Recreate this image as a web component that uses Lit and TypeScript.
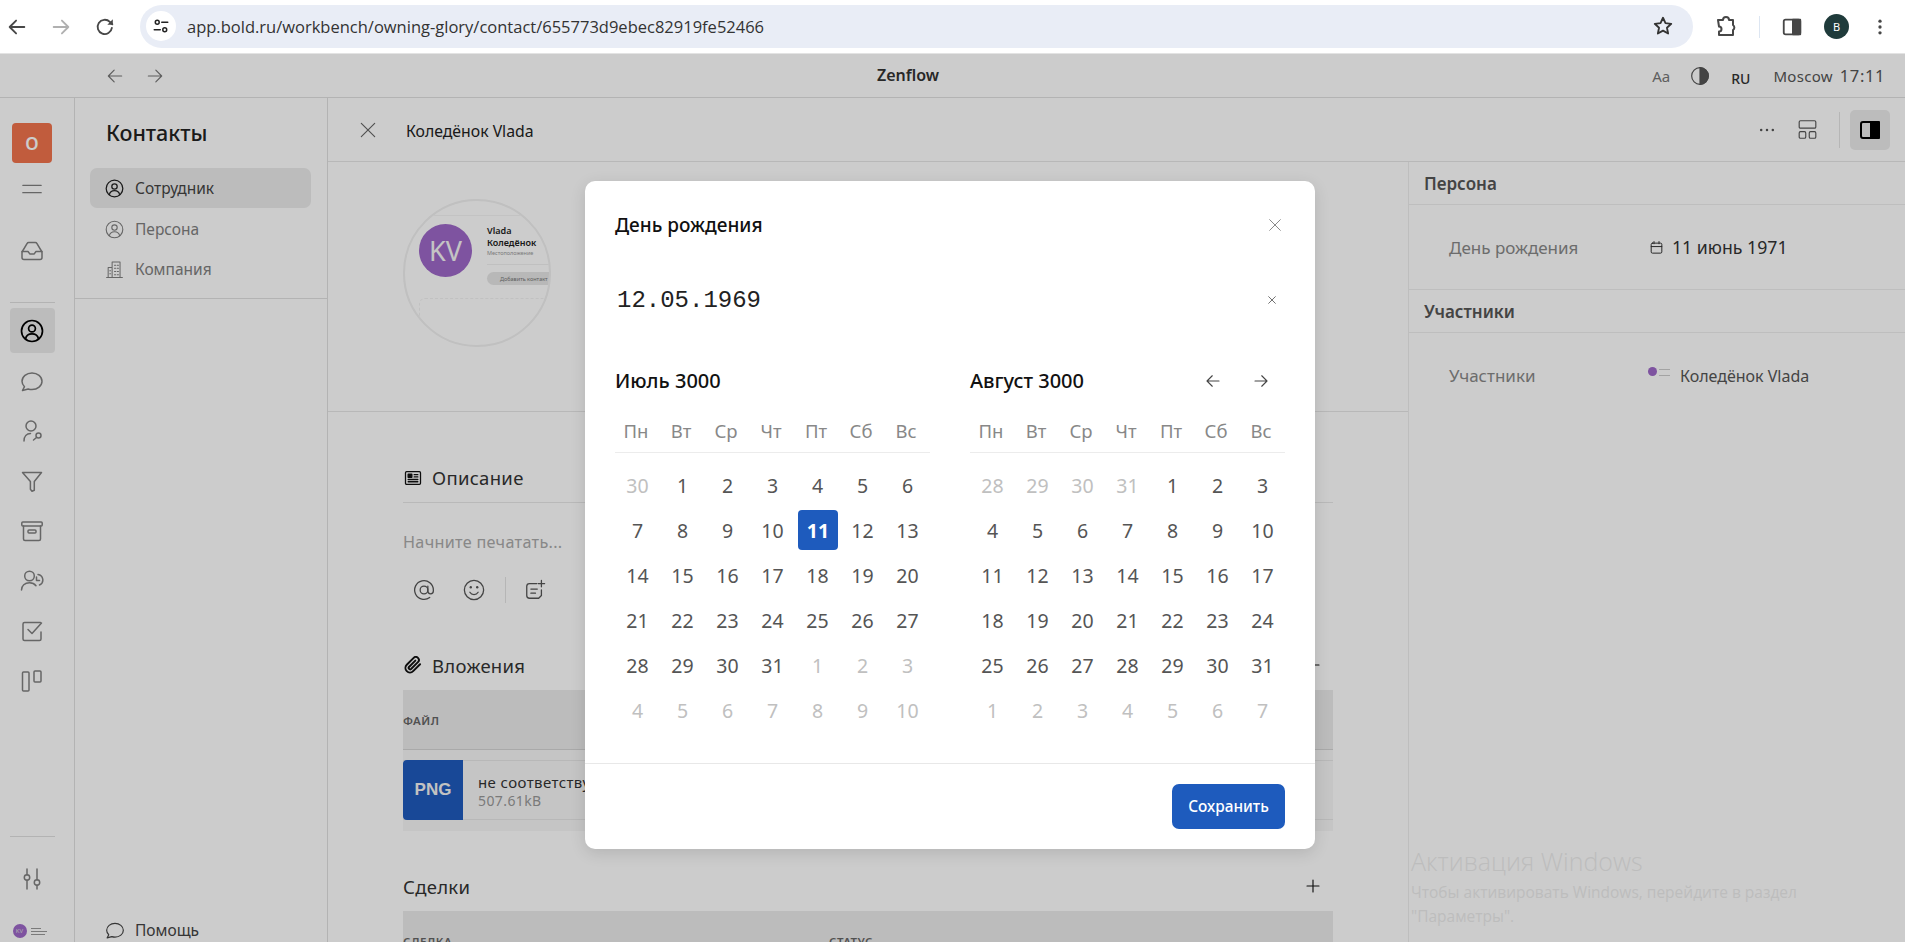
import { LitElement, css, html, svg } from 'lit';
import { customElement } from 'lit/decorators.js';
import { classMap } from 'lit/directives/class-map.js';

const icon = (body: unknown, size = 24, sw = 1.6) => html`<svg
  width=${size} height=${size} viewBox="0 0 24 24" fill="none" stroke="currentColor"
  stroke-width=${sw} stroke-linecap="round" stroke-linejoin="round">${body}</svg>`;

const I = {
  back: svg`<path d="M20 12H4M11 5l-7 7 7 7"/>`,
  forward: svg`<path d="M4 12h16M13 5l7 7-7 7"/>`,
  close: svg`<path d="M4 4l16 16M20 4L4 20"/>`,
  reload: svg`<path d="M19.5 13a7.8 7.8 0 1 1-2.2-6.6L20 9"/><path d="M20.5 3.5V9.5h-6" fill="currentColor" stroke="none"/>`,
  tune: svg`<circle cx="7" cy="7" r="2.6"/><path d="M13 7h8M3 17h8"/><circle cx="17" cy="17" r="2.6"/>`,
  star: svg`<path d="M12 3l2.7 5.9 6.3.7-4.7 4.3 1.3 6.3L12 17l-5.6 3.2 1.3-6.3L3 9.6l6.3-.7z"/>`,
  puzzle: svg`<path d="M4 5h5a3 3 0 0 1 6 0h4v5a3 3 0 0 1 0 5v5H5v-3.5a2.5 2.5 0 0 0 0-5z"/>`,
  panel: svg`<rect x="3" y="4" width="18" height="16" rx="2"/><rect x="13" y="4" width="8" height="16" fill="currentColor"/>`,
  dots: svg`<g fill="currentColor" stroke="none"><circle cx="12" cy="5" r="2"/><circle cx="12" cy="12" r="2"/><circle cx="12" cy="19" r="2"/></g>`,
  menu: svg`<path d="M2 8h20M2 16h20"/>`,
  inbox: svg`<path d="M2 13.5h6l2 2.6h4l2-2.6h6v6a2 2 0 0 1-2 2H4a2 2 0 0 1-2-2z"/><path d="M2.3 13.5L7 5.6A2 2 0 0 1 8.700 4.600h6.600A2 2 0 0 1 17 5.600l4.700 7.900"/>`,
  userCircle: svg`<circle cx="12" cy="12" r="10.500"/><circle cx="12" cy="9.500" r="3.400"/><path d="M5.500 20c.6-3.400 3.200-5.200 6.500-5.200s5.900 1.800 6.500 5.200"/>`,
  chat: svg`<path d="M2.500 21.500l2-3.800C2.900 16.200 2 14.300 2 12.300 2 7.700 6.500 4 12 4s10 3.700 10 8.300-4.500 8.300-10 8.300c-1.300 0-2.600-.2-3.800-.6z"/>`,
  personSearch: svg`<circle cx="11" cy="7" r="5"/><path d="M4 22c0-4.500 2.700-7.500 6.500-7.500"/><circle cx="18.500" cy="16.500" r="2.500"/><path d="M16.500 18.500L13.500 21"/>`,
  funnel: svg`<path d="M2.500 3.500h19l-7.200 9v8.800l-2.300 1-1.600-2v-7.800z"/>`,
  archive: svg`<rect x="1.800" y="3" width="20.400" height="4" rx="1"/><path d="M3.500 7v13a1.500 1.500 0 0 0 1.500 1.500h14a1.500 1.500 0 0 0 1.500-1.500V7"/><rect x="8" y="11" width="8" height="3" rx="1"/>`,
  usersClock: svg`<circle cx="9.500" cy="7" r="4.800"/><path d="M1.500 21c0-4.300 3.300-7.300 8-7.300 2.800 0 5 1 6.500 3"/><path d="M18 5.500a5.500 5.500 0 0 1 1.500 10.500"/><path d="M16.500 8v3.500h3"/>`,
  checkSquare: svg`<path d="M20.500 3.500H4.500A1.500 1.500 0 0 0 3 5v15a1.500 1.500 0 0 0 1.500 1.500h15A1.500 1.500 0 0 0 21 20v-7"/><path d="M8 10.500l4 4 9.500-10.500"/>`,
  kanban: svg`<rect x="2.500" y="3" width="6.500" height="19" rx="1"/><rect x="14" y="2" width="7" height="11" rx="1"/>`,
  sliders: svg`<path d="M7 2v6M7 13v9M17 2v11M17 18v4"/><circle cx="7" cy="10.500" r="2.700"/><circle cx="17" cy="15.500" r="2.700"/>`,
  building: svg`<path d="M2 22h20M9 22V2.500h10V22M9 9.500H4V22"/><path d="M12 6.500h1.500M15.500 6.500H17M12 10.500h1.500M15.500 10.500H17M12 14.500h1.500M15.500 14.500H17M12 18.500h1.500M15.500 18.500H17M6 13.500h1M6 17.500h1"/>`,
  newspaper: svg`<rect x="2" y="3.500" width="20" height="17" rx="1.500"/><rect x="5.500" y="7" width="5" height="4" fill="currentColor"/><path d="M13.500 7.500h5M13.500 10.500h5M5.500 14h13M5.500 17h13"/>`,
  clip: svg`<path d="M21.400 11l-9.200 9.200a6 6 0 0 1-8.500-8.500l9.200-9.200a4 4 0 0 1 5.700 5.700l-9.200 9.200a2 2 0 0 1-2.800-2.800l8.500-8.500"/>`,
  at: svg`<circle cx="12" cy="12" r="4.200"/><path d="M16.200 7.800v5.400a3 3 0 0 0 6 0V12a10.200 10.200 0 1 0-4 8.100"/>`,
  smile: svg`<circle cx="12" cy="12" r="10.500"/><path d="M7.500 14.500s1.500 2.500 4.500 2.500 4.500-2.500 4.500-2.500"/><g fill="currentColor" stroke="none"><circle cx="8.500" cy="9" r="1.300"/><circle cx="15.500" cy="9" r="1.300"/></g>`,
  notePlus: svg`<path d="M14 5H6a3 3 0 0 0-3 3v10a3 3 0 0 0 3 3h10l3-3v-6"/><path d="M7.500 11h7M7.500 15.500h5M19 1.500v7M15.500 5h7"/>`,
  plus: svg`<path d="M12 3v18M3 12h18"/>`,
  layout: svg`<rect x="2.500" y="2" width="19" height="8.500" rx="1.500"/><rect x="2.500" y="14.500" width="7.500" height="7.500" rx="1.500"/><rect x="14" y="14.500" width="7.500" height="7.500" rx="1.500"/>`,
  contrast: svg`<circle cx="12" cy="12" r="10"/><path d="M12 2a10 10 0 0 1 0 20z" fill="currentColor"/>`,
  calendar: svg`<rect x="3.500" y="5" width="17" height="16" rx="2"/><path d="M3.500 10.500h17M8 2.500V6M16 2.500V6"/>`,
};

const railItems = [I.chat, I.personSearch, I.funnel, I.archive, I.usersClock, I.checkSquare, I.kanban];
const weekDays = ['Пн', 'Вт', 'Ср', 'Чт', 'Пт', 'Сб', 'Вс'];

type Day = { n: number; muted: boolean; selected?: boolean };

function range(from: number, to: number, muted: boolean): Day[] {
  const out: Day[] = [];
  for (let n = from; n <= to; n++) out.push({ n, muted });
  return out;
}

const july = [...range(30, 30, true), ...range(1, 31, false), ...range(1, 10, true)]
  .map((d) => (d.n === 11 && !d.muted ? { ...d, selected: true } : d));
const august = [...range(28, 31, true), ...range(1, 31, false), ...range(1, 7, true)];

@customElement('app-root')
export class AppRoot extends LitElement {
  static styles = css`
    :host {
      display: block;
      position: relative;
      height: 100vh;
      overflow: hidden;
      background: #fff;
      color: #333;
      font-family: "Noto Sans", "Liberation Sans", sans-serif;
    }
    svg { display: block; flex: none; }

    /* browser chrome */
    .chrome {
      height: 53px;
      border-bottom: 1px solid #e3e3e3;
      display: flex;
      align-items: center;
      background: #fff;
      color: #474747;
    }
    .nav-btns { display: flex; align-items: center; gap: 22px; padding-left: 6px; width: 140px; box-sizing: border-box; }
    .nav-btns .off { color: #b0b0b0; }
    .omni {
      width: 1553px;
      height: 43px;
      flex: none;
      margin-top: -1px;
      border-radius: 22px;
      background: #e9edf6;
      display: flex;
      align-items: center;
      padding: 0 19px 0 6px;
      box-sizing: border-box;
      font-family: "Open Sans", sans-serif;
      font-size: 16.500px;
      color: #333;
    }
    .site { width: 30px; height: 30px; border-radius: 50%; background: #fff; display: flex; align-items: center; justify-content: center; margin-right: 11px; color: #222; }
    .url { flex: 1; }
    .chrome-right { display: flex; align-items: center; flex: 1; padding-left: 21px; }
    .chrome-sep { width: 1px; height: 22px; background: #dde6f2; margin: 0 21px 0 21px; }
    .profile { width: 25px; height: 25px; border-radius: 50%; background: #1f3b3b; color: #fff; font-size: 11px; display: flex; align-items: center; justify-content: center; margin: 0 21px 0 21px; }

    /* app */
    .topbar {
      height: 43px;
      border-bottom: 1px solid #e0e0e0;
      display: flex;
      align-items: center;
      position: relative;
      color: #666;
    }
    .top-nav { display: flex; gap: 20px; padding-left: 105px; color: #777; }
    .brand { position: absolute; left: 0; right: 89px; top: 11px; text-align: center; font-size: 16px; font-weight: 600; color: #333; line-height: 20px; pointer-events: none; }
    .top-right { margin-left: auto; display: flex; align-items: center; padding-right: 20px; font-size: 15px; color: #555; }
    .aa { margin-right: 20px; color: #777; }
    .ru { margin: 5px 23px 0 21px; font-size: 14px; font-weight: 500; color: #333; }
    .moscow { margin-right: 7px; letter-spacing: 0.3px; }
    .time { font-size: 16.500px; letter-spacing: 0.6px; }

    .body { display: flex; height: calc(100vh - 98px); }

    .rail {
      width: 74px;
      flex: none;
      border-right: 1px solid #e0e0e0;
      display: flex;
      flex-direction: column;
      align-items: center;
      color: #808080;
    }
    .rail > * { margin-right: 10px; }
    .badge { width: 40px; height: 40px; margin-top: 25px; border-radius: 4px; background: #f2734d; color: #fff; display: flex; align-items: center; justify-content: center; font-size: 17px; font-weight: 600; }
    .rail-menu { margin-top: 15px; }
    .rail-inbox { margin-top: 38px; }
    .rail-line { width: 45px; height: 1px; background: #e0e0e0; flex: none; }
    .rail-line.top { margin-top: 40px; margin-bottom: 5px; }
    .rail-active { width: 45px; height: 45px; border-radius: 4px; background: #ececec; color: #000; display: flex; align-items: center; justify-content: center; }
    .rail-btn { height: 50px; display: flex; align-items: center; justify-content: center; flex: none; }
    .rail-btn.first { margin-top: 3px; }
    .rail-bottom { margin-top: auto; display: flex; flex-direction: column; align-items: center; }
    .rail-sliders { margin-top: 30px; }
    .mini { width: 39px; height: 22px; margin: 29px 0 0; display: flex; align-items: center; gap: 4px; }
    .mini-dot { width: 14px; height: 14px; border-radius: 50%; background: #9e68c8; color: #ddd; font-size: 6px; display: flex; align-items: center; justify-content: center; }
    .mini-lines { display: flex; flex-direction: column; gap: 2px; }
    .mini-lines i { display: block; height: 1px; background: #999; }

    .side {
      width: 252px;
      flex: none;
      border-right: 1px solid #e0e0e0;
      display: flex;
      flex-direction: column;
    }
    .side-head { height: 201px; box-sizing: border-box; border-bottom: 1px solid #e0e0e0; padding: 70px 16px 0 15px; flex: none; position: relative; }
    .side h1 { position: absolute; left: 31px; top: 20px; margin: 0; font-size: 21.500px; font-weight: 500; line-height: 30px; color: #222; }
    .side-item { height: 40px; display: flex; align-items: center; gap: 11px; padding-left: 15px; border-radius: 7px; font-size: 15.500px; color: #808080; }
    .side-item.active { background: #ececec; color: #444; margin-bottom: 1px; }
    .side-item.active svg { color: #222; }
    .side-help { margin-top: auto; height: 40px; display: flex; align-items: center; gap: 10px; padding-left: 30px; font-size: 15.500px; color: #444; margin-bottom: -8px; }

    .main { flex: 1; min-width: 0; display: flex; flex-direction: column; }
    .main-head { height: 64px; box-sizing: border-box; border-bottom: 1px solid #e6e6e6; display: flex; align-items: center; padding-right: 15px; flex: none; color: #555; }
    .main-close { margin-left: 30px; margin-right: 27px; color: #666; }
    .main-title { font-size: 15.800px; color: #222; flex: 1; padding-top: 2px; margin-left: 1px; }
    .more { margin-right: 20px; color: #555; }
    .head-sep { width: 1px; height: 36px; background: #e4e4e4; margin: 0 10px 0 21px; }
    .head-active { width: 40px; height: 40px; border-radius: 5px; background: #ececec; display: flex; align-items: center; justify-content: center; color: #000; }

    .main-cols { flex: 1; display: flex; min-height: 0; }
    .content { width: 1080px; flex: none; overflow: hidden; }
    .hero { height: 250px; box-sizing: border-box; border-bottom: 1px solid #e6e6e6; padding: 37px 0 0 75px; }
    .scope { width: 148px; height: 148px; box-sizing: border-box; border: 2px solid #f0f0f0; border-radius: 50%; overflow: hidden; padding: 0 0 0 14px; }
    .scope-rule { height: 1px; background: #f4f4f4; margin-top: 14px; margin-left: -14px; }
    .scope-row { display: flex; gap: 15px; margin-top: 8px; }
    .avatar { width: 53px; height: 53px; flex: none; border-radius: 50%; background: #9e68c8; color: #f6f6f6; font-size: 27px; display: flex; align-items: center; justify-content: center; }
    .scope-info { width: 110px; flex: none; font-size: 9px; font-weight: 600; line-height: 12px; color: #222; margin-top: 1px; }
    .scope-loc { font-size: 5.500px; font-weight: 400; color: #999; line-height: 9px; }
    .scope-line { height: 1px; background: #f0f0f0; margin: 6px 0 7px; }
    .scope-pill { width: 90px; height: 13px; border-radius: 7px; background: #e6e6e6; font-size: 5.500px; font-weight: 400; color: #777; display: flex; align-items: center; padding-left: 13px; box-sizing: border-box; }
    .scope-dash { height: 60px; margin: 13px 0 0; border: 1px dashed #f2f2f2; border-radius: 6px; }

    .sections { padding: 41px 75px 0; }
    .sec-head { height: 50px; box-sizing: border-box; padding: 0 0 0 1px; display: flex; align-items: center; gap: 10px; border-bottom: 1px solid #e8e8e8; font-size: 18.500px; color: #333; letter-spacing: 0.3px; }
    .sec-head svg { color: #111; }
    .ph { margin-top: 27px; line-height: 24px; font-size: 16.200px; color: #aaa; letter-spacing: 0.3px; }
    .tools { margin-top: 21px; height: 30px; display: flex; align-items: center; padding-left: 10px; color: #555; }
    .tools .g { margin-left: 28px; }
    .tools-sep { width: 1px; height: 26px; background: #e4e4e4; margin: 0 18px 0 20px; }
    .sec-row { margin-top: 40px; margin-bottom: 5px; height: 40px; display: flex; align-items: center; gap: 10px; font-size: 18.500px; padding-left: 1px; letter-spacing: 0.3px; }
    .sec-row svg { color: #111; }
    .sec-row .add { margin-left: auto; margin-right: 12px; color: #555; }
    .sec-row.deals { margin-top: 35px; margin-bottom: 5px; padding-left: 0; }
    .t-head { height: 60px; box-sizing: border-box; padding-top: 2px; background: #ececec; border-bottom: 1px solid #d4d4d4; display: flex; align-items: center; font-size: 11.500px; font-weight: 600; color: #666; letter-spacing: 0.5px; }
    .t-head span.st { position: absolute; left: 829px; }
    .t-row { height: 81px; box-sizing: border-box; background: #f7f7f7; padding: 10px 0; }
    .file { height: 60px; box-sizing: border-box; display: flex; border-top: 1px solid #e6e6e6; border-bottom: 1px solid #e6e6e6; }
    .file-type { width: 60px; flex: none; margin: -1px 0; background: #1e5bbd; color: #f3f3f3; border-radius: 4px 0 0 4px; font-family: "Liberation Sans", sans-serif; font-size: 17px; font-weight: 700; display: flex; align-items: center; justify-content: center; }
    .file-text { padding: 12px 0 0 15px; font-size: 15px; line-height: 18px; color: #333; letter-spacing: 0.4px; white-space: nowrap; }
    .file-size { color: #999; font-size: 14px; }

    .info { flex: 1; border-left: 1px solid #eee; }
    .info-title { height: 43px; box-sizing: border-box; border-bottom: 1px solid #eee; padding-left: 15px; display: flex; align-items: center; font-size: 17px; font-weight: 600; color: #555; }
    .info-row { height: 85px; box-sizing: border-box; border-bottom: 1px solid #eee; padding-left: 40px; display: flex; align-items: center; font-size: 17px; color: #888; }
    .info-row.last { border-bottom: 0; height: 85px; }
    .info-label { width: 200px; }
    .info-value { display: flex; align-items: center; gap: 8px; color: #333; font-size: 17.700px; }
    .person { display: flex; align-items: center; gap: 10px; font-size: 16px; color: #555; margin-left: -1px; }
    .person-av { display: flex; gap: 2px; margin-top: -9px; }
    .person-av i { display: block; width: 9px; height: 9px; border-radius: 50%; background: #9e68c8; }
    .person-av u { display: block; width: 11px; height: 5px; margin-top: 2px; border-top: 1px solid #ccc; border-bottom: 1px solid #ccc; }

    /* modal */
    .overlay { position: absolute; left: 0; right: 0; top: 54px; bottom: 0; background: rgba(0, 0, 0, 0.2); }
    .dialog {
      position: absolute;
      left: 585px;
      top: 127px;
      width: 730px;
      box-sizing: border-box;
      padding-top: 29px;
      background: #fff;
      border-radius: 10px;
      box-shadow: 0 4px 16px rgba(0, 0, 0, 0.12);
      color: #111;
    }
    .d-head { height: 30px; padding: 0 30px; display: flex; align-items: center; justify-content: space-between; font-size: 19px; font-weight: 500; }
    .d-head svg { color: #777; margin-right: 2px; }
    .d-input { height: 48px; margin-top: 36px; padding: 0 32px; display: flex; align-items: center; justify-content: space-between; font-family: "Liberation Mono", monospace; font-size: 24px; color: #222; }
    .d-input svg { color: #555; margin-right: 6px; margin-top: -1px; }
    .cals { display: flex; gap: 40px; margin-top: 41px; padding: 0 30px; }
    .cal { width: 315px; }
    .cal-head { height: 30px; display: flex; align-items: center; font-size: 20px; font-weight: 500; }
    .cal-arrows { margin-left: auto; display: flex; gap: 30px; padding-right: 15px; color: #444; margin-top: 1px; }
    .wdays { display: grid; grid-template-columns: repeat(7, 45px); height: 44px; margin-top: 14px; box-sizing: border-box; border-bottom: 1px solid #ececec; font-size: 18.500px; color: #888; text-align: center; line-height: 44px; }
    .wdays span { margin-left: -3px; }
    .days { display: grid; grid-template-columns: repeat(7, 45px); grid-auto-rows: 40px; row-gap: 5px; margin-top: 12px; }
    .day { display: flex; align-items: center; justify-content: center; font-size: 19.500px; color: #555; }
    .day.muted { color: #c0c0c0; }
    .day b { width: 40px; height: 40px; margin-left: 1px; border-radius: 4px; background: #1e5bbd; color: #fff; font-weight: 700; display: flex; align-items: center; justify-content: center; }
    .d-foot { margin-top: 33px; border-top: 1px solid #e8e8e8; padding: 20px 30px; height: 45px; display: flex; justify-content: flex-end; }
    .save { width: 113px; height: 45px; border-radius: 7px; background: #1e5bbd; color: #fff; font-size: 15.400px; font-weight: 500; display: flex; align-items: center; justify-content: center; }

    .watermark { position: absolute; left: 1411px; top: 845px; color: #bdbdbd; font-family: "Open Sans", sans-serif; font-size: 15.500px; line-height: 24px; width: 460px; }
    .watermark div { font-size: 25px; font-weight: 300; line-height: 33px; margin-bottom: 2px; }
  `;

  private renderCal(title: string, days: Day[], arrows = false) {
    return html`
      <div class="cal">
        <div class="cal-head">
          ${title}
          ${arrows ? html`<div class="cal-arrows">${icon(I.back, 18, 1.5)}${icon(I.forward, 18, 1.5)}</div>` : ''}
        </div>
        <div class="wdays">${weekDays.map((d) => html`<span>${d}</span>`)}</div>
        <div class="days">
          ${days.map((d) => html`
            <div class=${classMap({ day: true, muted: d.muted })}>
              ${d.selected ? html`<b>${d.n}</b>` : d.n}
            </div>`)}
        </div>
      </div>`;
  }

  render() {
    return html`
      <div class="chrome">
        <div class="nav-btns">
          ${icon(I.back, 22, 2)}
          <span class="off">${icon(I.forward, 22, 2)}</span>
          ${icon(I.reload, 22, 2)}
        </div>
        <div class="omni">
          <span class="site">${icon(I.tune, 18, 2)}</span>
          <span class="url">app.bold.ru/workbench/owning-glory/contact/655773d9ebec82919fe52466</span>
          ${icon(I.star, 22, 2)}
        </div>
        <div class="chrome-right">
          ${icon(I.puzzle, 24, 2)}
          <span class="chrome-sep"></span>
          ${icon(I.panel, 22, 2)}
          <span class="profile">B</span>
          ${icon(I.dots, 20)}
        </div>
      </div>

      <div class="topbar">
        <div class="top-nav">${icon(I.back, 20, 1.4)}${icon(I.forward, 20, 1.4)}</div>
        <div class="brand">Zenflow</div>
        <div class="top-right">
          <span class="aa">Aa</span>
          ${icon(I.contrast, 20, 1.4)}
          <span class="ru">RU</span>
          <span class="moscow">Moscow</span>
          <span class="time">17:11</span>
        </div>
      </div>

      <div class="body">
        <div class="rail">
          <div class="badge">O</div>
          <div class="rail-menu">${icon(I.menu, 22, 1.5)}</div>
          <div class="rail-inbox">${icon(I.inbox, 24, 1.5)}</div>
          <div class="rail-line top"></div>
          <div class="rail-active">${icon(I.userCircle, 24, 1.7)}</div>
          ${railItems.map((it, i) => html`<div class="rail-btn ${i === 0 ? 'first' : ''}">${icon(it, 24, 1.5)}</div>`)}
          <div class="rail-bottom">
            <div class="rail-line"></div>
            <div class="rail-sliders">${icon(I.sliders, 24, 1.5)}</div>
            <div class="mini">
              <span class="mini-dot">KV</span>
              <span class="mini-lines"><i style="width:10px"></i><i style="width:16px"></i><i style="width:14px"></i></span>
            </div>
          </div>
        </div>

        <div class="side">
          <div class="side-head">
            <h1>Контакты</h1>
            <div class="side-item active">${icon(I.userCircle, 19, 1.6)}Сотрудник</div>
            <div class="side-item">${icon(I.userCircle, 19, 1.4)}Персона</div>
            <div class="side-item">${icon(I.building, 19, 1.3)}Компания</div>
          </div>
          <div class="side-help">${icon(I.chat, 20, 1.4)}Помощь</div>
        </div>

        <div class="main">
          <div class="main-head">
            <span class="main-close">${icon(I.close, 20, 1.4)}</span>
            <span class="main-title">Коледёнок Vlada</span>
            <span class="more">${icon(svg`<g fill="currentColor" stroke="none"><circle cx="5" cy="12" r="1.500"/><circle cx="12" cy="12" r="1.500"/><circle cx="19" cy="12" r="1.500"/></g>`, 20)}</span>
            ${icon(I.layout, 21, 1.3)}
            <span class="head-sep"></span>
            <span class="head-active">${icon(I.panel, 24, 2)}</span>
          </div>
          <div class="main-cols">
            <div class="content">
              <div class="hero">
                <div class="scope">
                  <div class="scope-rule"></div>
                  <div class="scope-row">
                    <div class="avatar">KV</div>
                    <div class="scope-info">
                      Vlada<br />Коледёнок
                      <div class="scope-loc">Местоположение</div>
                      <div class="scope-line"></div>
                      <div class="scope-pill">Добавить контакт</div>
                    </div>
                  </div>
                  <div class="scope-dash"></div>
                </div>
              </div>
              <div class="sections">
                <div class="sec-head">${icon(I.newspaper, 18, 1.7)}<span>Описание</span></div>
                <div class="ph">Начните печатать...</div>
                <div class="tools">
                  ${icon(I.at, 22, 1.4)}
                  <span class="g">${icon(I.smile, 22, 1.4)}</span>
                  <span class="tools-sep"></span>
                  ${icon(I.notePlus, 22, 1.4)}
                </div>
                <div class="sec-row">${icon(I.clip, 18, 2.6)}<span>Вложения</span><span class="add">${icon(I.plus, 16, 1.7)}</span></div>
                <div class="t-head">ФАЙЛ</div>
                <div class="t-row">
                  <div class="file">
                    <div class="file-type">PNG</div>
                    <div class="file-text">не соответствует<br /><span class="file-size">507.61kB</span></div>
                  </div>
                </div>
                <div class="sec-row deals"><span>Сделки</span><span class="add">${icon(I.plus, 16, 1.7)}</span></div>
                <div class="t-head">СДЕЛКА<span class="st">СТАТУС</span></div>
              </div>
            </div>
            <div class="info">
              <div class="info-title">Персона</div>
              <div class="info-row">
                <span class="info-label">День рождения</span>
                <span class="info-value">${icon(I.calendar, 15, 1.6)}11 июнь 1971</span>
              </div>
              <div class="info-title">Участники</div>
              <div class="info-row last">
                <span class="info-label">Участники</span>
                <span class="person"><span class="person-av"><i></i><u></u></span>Коледёнок Vlada</span>
              </div>
            </div>
          </div>
        </div>
      </div>

      <div class="overlay">
        <div class="dialog">
          <div class="d-head"><span>День рождения</span>${icon(I.close, 16, 1.3)}</div>
          <div class="d-input"><span>12.05.1969</span>${icon(I.close, 10, 2)}</div>
          <div class="cals">
            ${this.renderCal('Июль 3000', july)}
            ${this.renderCal('Август 3000', august, true)}
          </div>
          <div class="d-foot"><div class="save">Сохранить</div></div>
        </div>
      </div>

      <div class="watermark"><div>Активация Windows</div>Чтобы активировать Windows, перейдите в раздел "Параметры".</div>
    `;
  }
}
